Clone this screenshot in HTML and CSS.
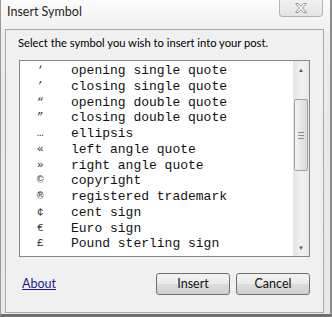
FILE: index.html
```html
<!DOCTYPE html>
<html lang="en">
<head>
    <meta charset="UTF-8">
    <title>Insert Symbol</title>
    <link rel="stylesheet" href="styles.css">
</head>
<body>
    <div class="window">
        <div class="titlebar">
            <span class="title">Insert Symbol</span>
            <span class="close-btn">
                <svg width="14" height="10" viewBox="0 0 14 10">
                    <path d="M1.5 0.5 L4.5 0.5 L7 3.3 L9.5 0.5 L12.5 0.5 L8.6 5 L12.5 9.5 L9.5 9.5 L7 6.7 L4.5 9.5 L1.5 9.5 L5.4 5 Z" fill="#f4f4f4" stroke="#9a9a9a" stroke-width="1"/>
                </svg>
            </span>
        </div>

        <div class="panel">
            <p class="intro">Select the symbol you wish to insert into your post.</p>

            <div class="listbox">
                <ul class="symbols" id="symbolList"></ul>
                <div class="scrollbar">
                    <div class="arrow">&#9650;</div>
                    <div class="track">
                        <div class="thumb"><span class="grip"></span></div>
                    </div>
                    <div class="arrow">&#9660;</div>
                </div>
            </div>

            <div class="footer">
                <a href="#" class="about">About</a>
                <div class="buttons">
                    <button class="btn">Insert</button>
                    <button class="btn">Cancel</button>
                </div>
            </div>
        </div>
    </div>

    <script>
        const symbols = [
            ['\u2018', 'opening single quote'],
            ['\u2019', 'closing single quote'],
            ['\u201C', 'opening double quote'],
            ['\u201D', 'closing double quote'],
            ['\u2026', 'ellipsis'],
            ['\u00AB', 'left angle quote'],
            ['\u00BB', 'right angle quote'],
            ['\u00A9', 'copyright'],
            ['\u00AE', 'registered trademark'],
            ['\u00A2', 'cent sign'],
            ['\u20AC', 'Euro sign'],
            ['\u00A3', 'Pound sterling sign']
        ];

        const symbolList = document.getElementById('symbolList');

        symbols.forEach(([glyph, name]) => {
            const li = document.createElement('li');
            li.innerHTML = `<span class="glyph">${glyph}</span><span class="name">${name}</span>`;
            symbolList.appendChild(li);
        });
    </script>
</body>
</html>
```

FILE: styles.css
```css
body {
    margin: 0;
    background: #ffffff;
}

.window {
    width: 332px;
    height: 317px;
    box-sizing: border-box;
    display: flex;
    flex-direction: column;
    background: linear-gradient(#fbfbfb, #ececec 40px, #e8e8e8);
    border-left: 1px solid #9a9a9a;
    border-right: 2px solid #8c8c8c;
    border-bottom: 3px solid #6e6e6e;
    font-family: Lato, "Open Sans", sans-serif;
    font-size: 12px;
    color: #000;
}

.titlebar {
    height: 29px;
    display: flex;
    justify-content: space-between;
    align-items: flex-start;
    padding-left: 6px;
}

.title {
    margin-top: 4px;
    font-size: 12.5px;
    color: #1e1e1e;
}

.close-btn {
    width: 44px;
    height: 17px;
    margin-right: 7px;
    box-sizing: border-box;
    display: flex;
    align-items: center;
    justify-content: center;
    border: 1px solid #b4b4b4;
    border-top: none;
    border-radius: 0 0 4px 4px;
    background: linear-gradient(#f2f2f2, #e3e3e3);
}

.panel {
    flex: 1;
    margin: 0 6px 1px 4px;
    border: 1px solid #a8a8a8;
    background: #f0f0f0;
    padding: 0 13px 0 12px;
    display: flex;
    flex-direction: column;
}

.intro {
    margin: 5px 0 0 0;
    line-height: 16px;
    height: 25px;
    font-size: 11.2px;
}

.listbox {
    height: 197px;
    box-sizing: border-box;
    border: 1px solid #828790;
    background: #fff;
    display: flex;
    margin-left: 1px;
}

.symbols {
    flex: 1;
    list-style: none;
    margin: 0;
    padding: 2px 0 0 0;
    font-family: "Liberation Mono", "Courier New", monospace;
    font-size: 13px;
    line-height: 15.75px;
    color: #111;
}

.symbols li {
    display: flex;
}

.glyph {
    width: 51px;
    padding-left: 17px;
    box-sizing: border-box;
    font-size: 11px;
    color: #333;
}

.scrollbar {
    width: 16px;
    display: flex;
    flex-direction: column;
    background: linear-gradient(90deg, #e3e3e3, #f2f2f2 50%, #e8e8e8);
}

.arrow {
    height: 17px;
    display: flex;
    align-items: center;
    justify-content: center;
    font-size: 6px;
    color: #5a5a5a;
}

.track {
    flex: 1;
    padding-top: 21px;
}

.thumb {
    height: 72px;
    margin: 0 1px;
    box-sizing: border-box;
    border: 1px solid #a2a2a2;
    border-radius: 2px;
    background: linear-gradient(90deg, #f4f4f4, #e6e6e6 50%, #d8d8d8);
    display: flex;
    align-items: center;
    justify-content: center;
}

.grip {
    width: 6px;
    height: 5px;
    border-top: 1px solid #8a8a8a;
    border-bottom: 1px solid #8a8a8a;
    position: relative;
}

.grip::after {
    content: "";
    position: absolute;
    left: 0;
    right: 0;
    top: 2px;
    border-top: 1px solid #8a8a8a;
}

.footer {
    flex: 1;
    display: flex;
    align-items: center;
    justify-content: space-between;
    padding-bottom: 2px;
}

.about {
    color: #1a1a8c;
    text-decoration: underline;
    margin-left: 4px;
    font-size: 12.5px;
}

.buttons {
    display: flex;
    gap: 6px;
}

.btn {
    width: 74px;
    height: 22px;
    font-family: Lato, "Open Sans", sans-serif;
    font-size: 12.5px;
    color: #111;
    border: 1px solid #707070;
    border-radius: 3px;
    background: linear-gradient(#f2f2f2, #ebebeb 50%, #dddddd 51%, #cfcfcf);
    padding: 0;
}
```
